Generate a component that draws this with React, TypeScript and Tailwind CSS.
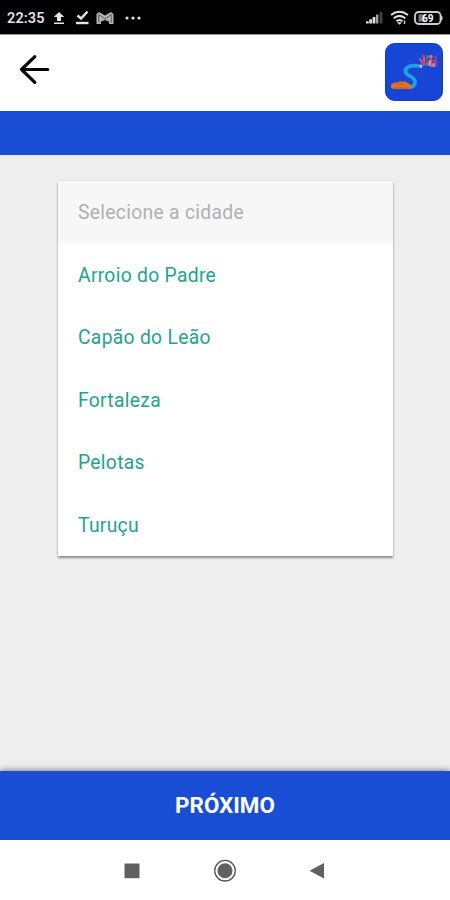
import React from "react";

const cities = [
  "Arroio do Padre",
  "Capão do Leão",
  "Fortaleza",
  "Pelotas",
  "Turuçu",
];

const StatusBar: React.FC = () => (
  <div className="flex h-[34px] shrink-0 items-center justify-between bg-black pl-[7px] pr-[6px] pt-px text-[#e4e4e4]">
    <div className="flex items-center">
      <span className="w-[46px] whitespace-nowrap pt-[2px] text-[14.5px] font-semibold tracking-[0.1px]">
        22:35
      </span>
      {/* upload */}
      <svg width="12" height="14" viewBox="0 0 12 14" className="fill-current">
        <path d="M6 1 11.300 6H8v4H4V6H0.700z" />
        <path d="M1 11.500h10v1.500H1z" />
      </svg>
      {/* check */}
      <svg width="14" height="15" viewBox="0 0 14 15" className="ml-[10px]">
        <path d="M2.500 5.500 6 8.500l6.500-7" fill="none" stroke="currentColor" strokeWidth="2.400" />
        <path d="M1 13h12.500" stroke="currentColor" strokeWidth="2.400" />
      </svg>
      {/* mail */}
      <svg width="18" height="14" viewBox="0 0 18 14" className="ml-[7px]">
        <path d="M0.500 13V3L3 1l6 3.500L15 1l2.500 2v10h-4.500v-2.500l-4-1.500-4 1.500V13z" fill="#b4b4b4" />
        <path d="M2.800 11.500V3.500L9 8l6.200-4.500v8" fill="none" stroke="#4e4e4e" strokeWidth="0.900" />
      </svg>
      {/* more */}
      <svg width="18" height="4" viewBox="0 0 18 4" className="ml-[10px] fill-current">
        <circle cx="3" cy="2" r="1.600" />
        <circle cx="9" cy="2" r="1.600" />
        <circle cx="15" cy="2" r="1.600" />
      </svg>
    </div>
    <div className="flex items-center">
      {/* signal */}
      <svg width="19" height="13" viewBox="0 0 19 13">
        <path d="M0 10.300h2.700v2.200H0zM3.300 8.300H6v4.200H3.300zM6.600 6h2.800v6.500H6.600z" fill="#dedede" />
        <path d="M10 3.500h2.400v9H10z" fill="#a0a0a0" />
        <path d="M13.600 1h2.800v11.500h-2.800z" fill="#444" />
      </svg>
      {/* wifi */}
      <svg
        width="19"
        height="15"
        viewBox="0 0 19 15"
        className="ml-[5px]"
        fill="none"
        stroke="currentColor"
        strokeWidth="2"
      >
        <path d="M1 5q8.500-6.500 17 0M3.800 8.200q5.700-4.700 11.400 0M6.500 11.200q3-2.500 6 0" />
        <path d="M8.500 12.800h2l-1 1zM14.500 10.500v3.500" strokeWidth="1.300" />
      </svg>
      {/* battery */}
      <svg width="30" height="14" viewBox="0 0 30 14" className="ml-[5px]">
        <rect x="1" y="1" width="25.500" height="12" rx="3.500" fill="none" stroke="#cfcfcf" strokeWidth="1.800" />
        <path d="M27 4q3.500 3 0 6z" fill="#cfcfcf" />
        <rect x="4.500" y="3.300" width="6" height="7.400" fill="#777" />
        <text x="13.700" y="10.600" textAnchor="middle" fontSize="10" fontWeight="700" fill="#fff">
          69
        </text>
      </svg>
    </div>
  </div>
);

const AppLogo: React.FC = () => (
  <svg width="58" height="58" viewBox="0 0 58 58">
    <rect x="0.500" y="0.500" width="57" height="57" rx="9" fill="#1745d6" stroke="#123cc0" />
    <path
      d="M35.500 23.500C27 21.500 20 23.500 20.500 28.500c0.500 5 9.500 4.500 9.500 10.500 0 3.500-1.500 5-5 5"
      fill="none"
      stroke="#20a0df"
      strokeWidth="3.800"
      strokeLinecap="round"
    />
    {/* car */}
    <path d="M6 42q1-2 5-2.500l4-1h5l5 2.500 2 2v2l-2 1H8l-2-1.500z" fill="#e0741f" />
    <path d="M11 41h8M8 45h15" stroke="#b35a2e" strokeWidth="0.900" />
    {/* people */}
    <g strokeWidth="2.200" strokeLinecap="round" fill="none">
      <path d="m35 16 2 3M39 14v8M46 16v7" stroke="#c25a94" />
      <path d="m36 22 2-3M50.500 14v9" stroke="#b5427c" />
      <path d="M42.500 13v2M42 20v2" stroke="#3f9a70" />
      <path d="M44.500 18v4M48.500 21v2" stroke="#e49aab" />
      <path d="m41 17 2 1M48 18l2-1" stroke="#b23e4f" />
    </g>
    <circle cx="38.500" cy="13" r="1.500" fill="#b5427c" />
    <circle cx="46" cy="13.500" r="1.700" fill="#d7738d" />
    <path d="m34 22 3.500 0.500-1 2.500z" fill="#d7eaf4" />
  </svg>
);

const Header: React.FC = () => (
  <header className="flex h-[77px] shrink-0 items-center justify-between border-t border-[#999] bg-white pb-[2px] pl-[19px] pr-[7px]">
    <button aria-label="Voltar" className="pb-[7px]">
      <svg
        width="32"
        height="32"
        viewBox="0 0 32 32"
        fill="none"
        stroke="#050505"
        strokeWidth="3.200"
        strokeLinecap="round"
        strokeLinejoin="round"
      >
        <path d="M28.800 16.500H2.500M15.800 3.700 2.500 16.500l13.300 12.800" />
      </svg>
    </button>
    <AppLogo />
  </header>
);

const CityList: React.FC = () => (
  <ul className="ml-[58px] mt-[26px] w-[335px] bg-white text-[19.3px] text-[#26a18c] shadow-[0_1.500px_2px_rgba(0,0,0,0.400),0_0_3px_rgba(0,0,0,0.080)]">
    <li className="flex h-[62.5px] items-center bg-[#f7f7f7] pl-5 pt-[3px] text-[#b0b0b0]">
      <span className="tracking-[0.3px]">Selecione a cidade</span>
    </li>
    {cities.map((city) => (
      <li key={city} className="flex h-[62.5px] items-center pl-5 pt-[3px]">
        <span className="tracking-[0.3px]">{city}</span>
      </li>
    ))}
  </ul>
);

const NavigationBar: React.FC = () => (
  <nav className="flex h-[60px] shrink-0 items-center justify-between bg-white pl-[124px] pr-[125px] pt-[2px]">
    <svg width="16" height="16" viewBox="0 0 16 16">
      <path d="M0.500 0.500h15v14.700h-15z" fill="#606060" />
    </svg>
    <svg width="24" height="24" viewBox="0 0 24 24">
      <circle cx="12" cy="11.700" r="10.300" fill="none" stroke="#555" strokeWidth="1.300" />
      <circle cx="12" cy="11.700" r="7.500" fill="#606060" />
    </svg>
    <svg width="16" height="16" viewBox="0 0 16 16">
      <path d="M15 0v15.500L0.500 7.700z" fill="#606060" />
    </svg>
  </nav>
);

export default function App() {
  return (
    <div className="flex h-[900px] w-[450px] flex-col overflow-hidden bg-[#eeeeee] font-[Roboto,sans-serif]">
      <StatusBar />
      <Header />
      <div className="h-[44px] shrink-0 bg-[#194dd3]" />
      <main className="flex-1">
        <CityList />
      </main>
      <button className="h-[69px] shrink-0 bg-[#194dd3] text-[22.4px] font-bold text-white shadow-[0_-1px_6px_rgba(0,0,0,0.450)]">
        PRÓXIMO
      </button>
      <NavigationBar />
    </div>
  );
}
